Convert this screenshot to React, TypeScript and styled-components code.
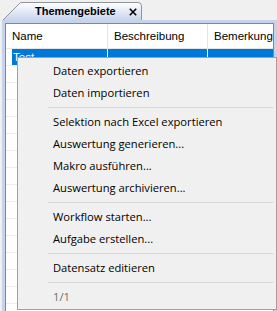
import React from 'react';
import styled, { createGlobalStyle } from 'styled-components';

const Global = createGlobalStyle`
  html, body { margin: 0; padding: 0; background: #f0f0f0; }
  body { width: 277px; height: 311px; overflow: hidden; }
`;

const Window = styled.div`
  position: relative;
  width: 277px;
  height: 311px;
  overflow: hidden;
  background: #f0f0f0;
  display: flex;
  flex-direction: column;
`;

const TabStrip = styled.div`
  height: 20px;
  display: flex;
  align-items: flex-end;
  padding-left: 2px;
`;

const Tab = styled.div`
  position: relative;
  width: 140px;
  height: 18px;
  display: flex;
  align-items: center;
  padding-left: 33px;
  box-sizing: border-box;
`;

const TabShape = styled.svg`
  position: absolute;
  left: 0;
  top: 0;
  width: 140px;
  height: 18px;
`;

const TabTitle = styled.span`
  position: relative;
  font-family: 'Liberation Sans', Arial, sans-serif;
  font-weight: bold;
  font-size: 11px;
  color: #000;
  line-height: 18px;
`;

const CloseIcon = styled.svg`
  position: relative;
  margin-left: 13px;
  width: 8px;
  height: 8px;
  margin-top: 1px;
`;

const Panel = styled.div`
  flex: 1;
  margin-left: 2px;
  background: #c7d3ec;
  padding: 3px 3px 0 3px;
  display: flex;
  min-height: 0;
`;

const Grid = styled.div`
  flex: 1;
  background: #fff;
  border: 1px solid #828790;
  border-bottom: none;
  display: flex;
  flex-direction: column;
  overflow: hidden;
`;

const HeaderRow = styled.div`
  height: 24px;
  display: grid;
  grid-template-columns: 102px 100px 1fr;
  border-bottom: 1px solid #e5e5e5;
  flex-shrink: 0;
`;

const HeaderCell = styled.div`
  border-right: 1px solid #e5e5e5;
  padding-left: 6px;
  display: flex;
  align-items: center;
  font-family: 'Liberation Sans', Arial, sans-serif;
  font-size: 11.5px;
  color: #000;
  &:last-child { border-right: none; }
`;

const Row = styled.div`
  height: 17px;
  box-sizing: border-box;
  flex-shrink: 0;
  border-bottom: 1px solid #ececec;
  display: grid;
  grid-template-columns: 6px 96px 100px 1fr;
`;

const Cell = styled.div<{ $selected?: boolean; $gutter?: boolean }>`
  background: ${p => (p.$selected && !p.$gutter ? '#0078d7' : '#fff')};
  color: ${p => (p.$selected ? '#fff' : '#000')};
  border-right: ${p => (p.$gutter ? 'none' : '1px solid #fff')};
  font-family: 'Liberation Sans', Arial, sans-serif;
  font-size: 11.5px;
  line-height: 16px;
  padding-left: 1px;
  white-space: nowrap;
  overflow: hidden;
  &:last-child { border-right: none; }
`;

const Menu = styled.div`
  position: absolute;
  left: 17px;
  top: 57px;
  width: 260px;
  height: 253px;
  box-sizing: border-box;
  background: #f0f0f0;
  border: 1px solid #a0a0a0;
  padding: 2px 2px 1px 2px;
  display: flex;
  flex-direction: column;
`;

const Item = styled.div<{ $disabled?: boolean }>`
  height: 22px;
  line-height: 21px;
  padding-left: 33px;
  font-family: 'Open Sans', 'Noto Sans', sans-serif;
  font-size: 11.2px;
  color: ${p => (p.$disabled ? '#6d6d6d' : '#000')};
  white-space: nowrap;
`;

const Separator = styled.div`
  height: 7px;
  display: flex;
  align-items: center;
  padding-left: 28px;
  padding-right: 1px;
  &::after {
    content: '';
    flex: 1;
    height: 1px;
    background: #d7d7d7;
  }
`;

type Entry = { label?: string; sep?: boolean; disabled?: boolean };

const entries: Entry[] = [
  { label: 'Daten exportieren' },
  { label: 'Daten importieren' },
  { sep: true },
  { label: 'Selektion nach Excel exportieren' },
  { label: 'Auswertung generieren...' },
  { label: 'Makro ausführen...' },
  { label: 'Auswertung archivieren...' },
  { sep: true },
  { label: 'Workflow starten...' },
  { label: 'Aufgabe erstellen...' },
  { sep: true },
  { label: 'Datensatz editieren' },
  { sep: true },
  { label: '1/1', disabled: true },
];

export default function App() {
  const emptyRows = Array.from({ length: 16 });
  return (
    <Window>
      <Global />
      <TabStrip>
        <Tab>
          <TabShape viewBox="0 0 140 18">
            <defs>
              <linearGradient id="tabfill" x1="0" y1="0" x2="0" y2="1">
                <stop offset="0" stopColor="#ffffff" />
                <stop offset="1" stopColor="#c7d3ec" />
              </linearGradient>
            </defs>
            <path
              d="M0.5 18.5 L18.5 0.5 L136 0.5 Q139.5 0.5 139.5 4 L139.5 18.5"
              fill="url(#tabfill)"
              stroke="#8e939c"
              strokeWidth="1"
            />
          </TabShape>
          <TabTitle>Themengebiete</TabTitle>
          <CloseIcon viewBox="0 0 8 8">
            <path d="M0.8 0.8 L7.2 7.2 M7.2 0.8 L0.8 7.2" stroke="#000" strokeWidth="1.6" />
          </CloseIcon>
        </Tab>
      </TabStrip>
      <Panel>
        <Grid>
          <HeaderRow>
            <HeaderCell>Name</HeaderCell>
            <HeaderCell>Beschreibung</HeaderCell>
            <HeaderCell>Bemerkung</HeaderCell>
          </HeaderRow>
          <Row>
            <Cell $selected $gutter />
            <Cell $selected>Test</Cell>
            <Cell $selected />
            <Cell $selected />
          </Row>
          {emptyRows.map((_, i) => (
            <Row key={i}>
              <Cell $gutter />
              <Cell />
              <Cell />
              <Cell />
            </Row>
          ))}
        </Grid>
      </Panel>
      <Menu>
        {entries.map((e, i) =>
          e.sep ? (
            <Separator key={i} />
          ) : (
            <Item key={i} $disabled={e.disabled}>
              {e.label}
            </Item>
          )
        )}
      </Menu>
    </Window>
  );
}
